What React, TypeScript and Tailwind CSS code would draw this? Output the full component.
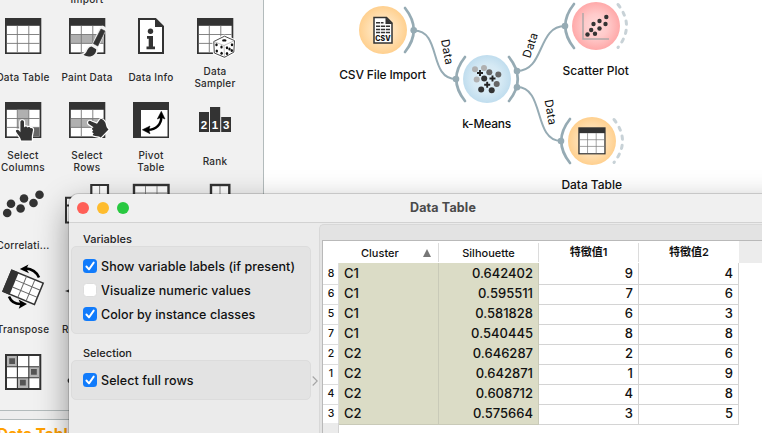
import React from "react";

const INK = "#333333";

function Grid({ row, col, corner }: { row?: boolean; col?: boolean; corner?: boolean }) {
  return (
    <g>
      <rect x="0" y="0" width="36.3" height="36" fill={INK} />
      <rect x="1.8" y="7.8" width="32.8" height="26.6" fill="#fff" />
      {row && <rect x="1.8" y="16.6" width="32.8" height="8.8" fill="#b0b0b0" />}
      {col && <rect x="12.4" y="7.8" width="11.4" height="26.6" fill="#b0b0b0" />}
      {corner && <rect x="24" y="25.5" width="10.6" height="8.9" fill="#666" />}
      <path d="M12.3 7.8V34.4M23.8 7.8V34.4M1.8 16.5H34.6M1.8 25.4H34.6" stroke="#777" strokeWidth="0.9" />
    </g>
  );
}

const icons: Record<string, React.ReactNode> = {
  table: <Grid />,
  paint: (
    <>
      <Grid row />
      <path d="M33.6 11.5L26.4 27.5" stroke="#f2f2f2" strokeWidth="7" strokeLinecap="round" />
      <path d="M13 36.5C18 35.5 17 29 22.5 28L28 31C28.5 38 19 41 13 36.5Z" fill="#f2f2f2" stroke="#f2f2f2" strokeWidth="2" />
      <path d="M32 11L36 13L28.8 28L24.4 25.6Z" fill={INK} stroke={INK} strokeWidth="0.6" strokeLinejoin="round" />
      <path d="M14.5 36.8C18.5 35.8 17.5 29.5 22.6 28.6L27.2 31.2C27.5 37.8 20 40.5 14.5 36.8Z" fill={INK} />
    </>
  ),
  info: (
    <>
      <path d="M6 1H22.5L30 8.5V35H6Z" fill="#fff" stroke={INK} strokeWidth="2" />
      <path d="M22 0L31 9H22Z" fill={INK} />
      <circle cx="17.5" cy="13.3" r="2.7" fill={INK} />
      <path d="M14 18H20V28.5H22V31.3H13.5V28.5H15.7V20.8H14Z" fill={INK} />
    </>
  ),
  sampler: (
    <>
      <Grid />
      <path d="M27.5 18.2L37.5 22.6L36.8 34.2L27.5 39.3L17.3 35L16.8 23.5Z" fill="#fff" stroke="#fff" strokeWidth="3" strokeLinejoin="round" />
      <path d="M27.5 18.2L37.5 22.6L36.8 34.2L27.5 39.3L17.3 35L16.8 23.5Z" fill="#fff" stroke={INK} strokeWidth="0.9" strokeLinejoin="round" />
      <path d="M16.8 23.5L27 27.5L37.5 22.6M27 27.5L27.5 39.3" fill="none" stroke="#999" strokeWidth="0.6" />
      <g fill="#111">
        <ellipse cx="27.3" cy="22.4" rx="2.2" ry="1.2" />
        <ellipse cx="19.5" cy="26.8" rx="1.2" ry="1.5" /><ellipse cx="24.5" cy="29" rx="1.2" ry="1.5" />
        <ellipse cx="19.8" cy="33" rx="1.2" ry="1.5" /><ellipse cx="24.6" cy="35.3" rx="1.2" ry="1.5" />
        <ellipse cx="30" cy="29.8" rx="1.2" ry="1.5" /><ellipse cx="35" cy="26.8" rx="1.2" ry="1.5" />
        <ellipse cx="32.5" cy="31" rx="1.2" ry="1.5" />
        <ellipse cx="30" cy="35.4" rx="1.2" ry="1.5" /><ellipse cx="34.8" cy="32.6" rx="1.2" ry="1.5" />
      </g>
    </>
  ),
  columns: (
    <>
      <Grid col corner />
      <path d="M15.4 20C15.4 17.8 19 17.8 19 20V25.5C20 24 22 24.3 22.3 25.6C23.4 24.5 25.2 25 25.4 26.3C26.6 25.6 28.2 26.5 28 28L26.8 34V38.4H16.2C15.5 35 12.5 32.5 11 29.5C10.4 27.8 12.8 27 14 28.6L15.4 30.2Z" fill={INK} stroke="#fff" strokeWidth="2.4" paintOrder="stroke" />
    </>
  ),
  rows: (
    <>
      <Grid row />
      <path d="M19.3 19.8C20 18.4 21.5 18.8 22.5 19.5L28 21.8L31 17.5C32.4 16.5 33.6 17.4 34.6 18.3C38 21.5 36 24.5 39.5 27.5L31.8 35.5C29.5 33.8 27 34.6 24.5 33.5C23.2 32.7 24 31.6 25 31.4C22.8 30.6 22.8 29.2 24.3 28.4C22.3 27.4 22.7 25.9 24.6 25.3L20.5 22.6C19.5 22 18.8 21 19.3 19.8Z" fill={INK} stroke="#fff" strokeWidth="2.4" paintOrder="stroke" />
    </>
  ),
  pivot: (
    <>
      <rect width="36" height="36" fill={INK} />
      <rect x="8" y="8" width="26.5" height="26.5" fill="#fff" />
      <path d="M28.3 15C28.5 22 23 27.8 15 27.8" fill="none" stroke="#000" strokeWidth="2.4" />
      <path d="M28.3 9.3L32 17L28.3 15.6L24.3 17ZM9.3 27.8L17 24L15.8 27.8L17 31.8Z" fill="#000" stroke="#000" strokeWidth="0.5" />
    </>
  ),
  rank: (
    <>
      <path d="M2 10H12V30H2ZM13 5H23.2V30H13ZM24.2 15H34V30H24.2Z" fill={INK} />
      <g fill="#fff" fontSize="11.5" fontWeight="700" fontFamily="Liberation Sans, sans-serif" textAnchor="middle">
        <text x="7" y="27">2</text><text x="17.9" y="27">1</text><text x="29.2" y="27">3</text>
      </g>
    </>
  ),
  correlations: (
    <g fill={INK}>
      <circle cx="2.2" cy="27" r="4.3" /><circle cx="6" cy="17.8" r="4.3" /><circle cx="15.6" cy="22.5" r="4.3" />
      <circle cx="19" cy="12.5" r="4.3" /><circle cx="28.5" cy="17" r="4.3" /><circle cx="34.5" cy="8.7" r="4.3" />
    </g>
  ),
  merge: (
    <>
      <path d="M-3 11.8H20V36.5H-3ZM-3 19.5H20" fill="#fff" stroke={INK} strokeWidth="2" />
      <path d="M22.3 -1H39V30H22.3Z" fill="#fff" stroke={INK} strokeWidth="2.2" />
      <path d="M30.6 0V20" stroke="#777" strokeWidth="0.9" />
    </>
  ),
  concat: (
    <>
      <rect x="1" y="-1" width="34.5" height="30" fill="#fff" stroke={INK} strokeWidth="2.4" />
      <path d="M12.5 0V28M24 0V28M2 7H35" stroke="#777" strokeWidth="0.9" />
    </>
  ),
  unique: (
    <>
      <rect x="14" y="-1" width="18.3" height="30" fill="#fff" stroke={INK} strokeWidth="2.4" />
      <path d="M23 0V28" stroke="#777" strokeWidth="0.9" />
    </>
  ),
  transpose: (
    <>
      <g transform="translate(7 -0.3) rotate(22.5)">
        <rect x="0" y="0.5" width="34" height="23" fill="#fff" stroke={INK} strokeWidth="1.5" />
        <rect x="-0.7" y="0" width="8" height="24" fill={INK} />
        <path d="M16 0.5V23.5M25 0.5V23.5M7 8.2H34M7 15.8H34" stroke="#666" strokeWidth="0.9" />
      </g>
      <path d="M34 7.5C31.5 1.7 27 -1 20.5 -1.6" fill="none" stroke="#000" strokeWidth="2.6" />
      <path d="M14.8 -1L23.5 -5.5L21.3 -1.3L24 3.2Z" />
      <path d="M4 26.5C6 31.5 10.5 34.2 16 34" fill="none" stroke="#000" strokeWidth="2.6" />
      <path d="M22 34L13.7 38.7L15.5 34L13.5 29.5Z" />
    </>
  ),
  randomize: <path d="M-4 21L4 18V24Z" fill={INK} />,
  discretize: (
    <>
      <rect x="1" y="1" width="34.3" height="34" fill="#fff" stroke={INK} strokeWidth="2" />
      <path d="M2 2H12V12.5H2ZM24 13H34V23.5H24ZM13 24H23.5V34H13Z" fill="#b5b5b5" />
      <path d="M12.4 2V34M23.8 2V34M2 12.8H34M2 23.7H34" stroke={INK} strokeWidth="1.1" />
      <path d="M4.2 4.2H10V10H4.2ZM26 15H31.8V20.8H26ZM15 25.8H20.8V31.6H15Z" fill="#555" />
    </>
  ),
  melt: <circle cx="1.2" cy="26.5" r="2.6" fill={INK} />,
};

const palette: [string, string][][] = [
  [["table", "Data Table"], ["paint", "Paint Data"], ["info", "Data Info"], ["sampler", "Data\nSampler"]],
  [["columns", "Select\nColumns"], ["rows", "Select\nRows"], ["pivot", "Pivot\nTable"], ["rank", "Rank"]],
  [["correlations", "Correlati..."], ["merge", ""], ["concat", ""], ["unique", ""]],
  [["transpose", "Transpose"], ["randomize", "Rename"]],
  [["discretize", ""], ["melt", ""]],
];

function Palette() {
  return (
    <div className="flex h-[433px] w-[264px] shrink-0 flex-col overflow-hidden">
      <div className="h-[411px] shrink-0 overflow-hidden border-r border-b border-[#b3bbbc] bg-[#f1f1f1]">
        <div className="ml-[55px] flex h-[5px] w-16 items-end justify-center text-[10px] leading-3 font-medium tracking-[0.25px] text-[#2b2b2b]">
          Import
        </div>
        <div className="-ml-[9px] grid w-[256px] grid-cols-[repeat(4,64px)]">
          {palette.map((row, r) =>
            [0, 1, 2, 3].map((c) => {
              const item = row[c];
              return (
                <div key={`${r}-${c}`} className="flex h-[84px] flex-col items-center gap-[11px] pt-[13px]">
                  <svg className="h-9 w-9 shrink-0 overflow-visible" viewBox="0 0 36 36">{item && icons[item[0]]}</svg>
                  <div className="flex h-6 shrink-0 items-center text-center text-[10px] leading-3 font-medium tracking-[0.25px] whitespace-pre text-[#2b2b2b]">
                    {item?.[0] === "randomize" ? <span className="w-[50px] text-left">{item[1]}</span> : item?.[1]}
                  </div>
                </div>
              );
            })
          )}
        </div>
      </div>
      <div className="h-[9px] shrink-0 border-b border-[#b3bbbc] bg-[#eeeeee]" />
      <div className="h-[13px] shrink-0 overflow-hidden bg-white pt-[5px]">
        <div className="-ml-[3px] text-[15.5px] leading-5 font-bold whitespace-nowrap text-[#ffa000]">Data Table</div>
      </div>
    </div>
  );
}

function Canvas() {
  return (
    <svg className="h-[433px] w-[498px] shrink-0 bg-white" viewBox="264 0 498 433">
      <defs>
        <radialGradient id="orange"><stop offset="0" stopColor="#ffe9cb" /><stop offset="0.5" stopColor="#ffe2b8" /><stop offset="1" stopColor="#ffd08f" /></radialGradient>
        <radialGradient id="blue"><stop offset="0" stopColor="#e0eff7" /><stop offset="0.6" stopColor="#d5e9f4" /><stop offset="1" stopColor="#c0ddee" /></radialGradient>
        <radialGradient id="red"><stop offset="0" stopColor="#ffdada" /><stop offset="0.5" stopColor="#ffcaca" /><stop offset="1" stopColor="#ffa9a9" /></radialGradient>
      </defs>
      <g fill="none" stroke="#96abb4" strokeWidth="2">
        <path d="M414 30.5C442 30.5 428 79 456 79" />
        <path d="M517 71C545 71 537 26 565 26" />
        <path d="M517 87C545 87 533 141 561 141" />
      </g>
      <g fill="none" stroke="#96abb4" strokeWidth="2.7" strokeLinecap="round">
        <path d="M405 8Q422.5 30 405 52" />
        <path d="M465 57Q447.5 79 465 101" />
        <path d="M509 57Q526.5 79 509 101" />
        <path d="M574 4Q556.5 26 574 48" />
        <path d="M570 119Q552.5 141 570 163" />
        <g stroke="#c8d2d7" strokeWidth="3" strokeDasharray="3.2 6.1">
          <path d="M618 4.500Q635 26 618 47.500" />
          <path d="M614 119.500Q631 141 614 162.500" />
        </g>
      </g>
      <g fill="#96abb4">
        <circle cx="413.7" cy="30.3" r="3.3" /><circle cx="456" cy="79" r="3.3" />
        <circle cx="517" cy="71" r="3.3" /><circle cx="517" cy="87.3" r="3.3" />
        <circle cx="565" cy="26" r="3.3" /><circle cx="561" cy="141" r="3.3" />
      </g>
      <circle cx="383" cy="30" r="24" fill="url(#orange)" />
      <circle cx="487" cy="79" r="24" fill="url(#blue)" />
      <circle cx="596" cy="26" r="24" fill="url(#red)" />
      <circle cx="592" cy="141" r="24" fill="url(#orange)" />

      <path d="M374 17.500H386.500L392 23V43H374Z" fill="#fff" stroke={INK} strokeWidth="1.500" />
      <path d="M385.500 17L392.500 24H385.500Z" fill={INK} />
      <path d="M376 22.800H383.500M376 26.300H390M376 29.600H390M376 32.600H390" stroke={INK} strokeWidth="1.500" strokeDasharray="4.200 0.800" />
      <text x="383" y="41" fontSize="7" fontWeight="800" textAnchor="middle" textLength="15.500" fill="#111">CSV</text>

      <g fill="#b0b0b0"><circle cx="475" cy="69.3" r="3" /><circle cx="484" cy="68" r="3" /><circle cx="476.7" cy="79.5" r="3" /></g>
      <g fill="#666"><circle cx="489.3" cy="72.3" r="3" /><circle cx="498.3" cy="74.5" r="3" /><circle cx="496.7" cy="84" r="3" /></g>
      <g fill={INK}><circle cx="484.2" cy="78.5" r="3" /><circle cx="481.2" cy="89.5" r="3" /><circle cx="491.7" cy="90.2" r="3" /></g>
      <path d="M477 73H483M480 70V76M489.500 78.500H495.500M492.500 75.500V81.500M484.200 84.800H490.200M487.200 81.800V87.800" stroke="#222" strokeWidth="1.900" />

      <path d="M583 13V39H609" fill="none" stroke="#b0a8a8" strokeWidth="1.500" />
      <g fill={INK}>
        <circle cx="587.5" cy="34.5" r="2.2" /><circle cx="591.2" cy="30" r="2.2" /><circle cx="595" cy="33.8" r="2.2" />
        <circle cx="593.5" cy="24" r="2.2" /><circle cx="599.5" cy="28.5" r="2.2" /><circle cx="599.5" cy="21" r="2.2" />
        <circle cx="605.5" cy="24" r="2.2" /><circle cx="606.3" cy="17" r="2.2" />
      </g>
      <g transform="translate(578.3 127.3) scale(0.752)"><Grid /></g>

      <g fontSize="12" fontWeight="500" fill="#111" textAnchor="middle">
        <text x="382.7" y="78.7" textLength="87">CSV File Import</text>
        <text x="486.7" y="127.7" textLength="49">k-Means</text>
        <text x="595.7" y="74.5" textLength="66.5">Scatter Plot</text>
        <text x="591.7" y="189.3" textLength="60.5">Data Table</text>
      </g>
      <g fontSize="11.500" fill="#111" textAnchor="middle">
        <text transform="translate(443.3 52.5) rotate(80)" textLength="25.5">Data</text>
        <text transform="translate(534 46.5) rotate(-72)" textLength="25.5">Data</text>
        <text transform="translate(546.7 112.7) rotate(80)" textLength="25.5">Data</text>
      </g>
    </svg>
  );
}

function Check({ label, on }: { label: string; on?: boolean }) {
  return (
    <div className="flex h-6 items-center gap-[4px]">
      <div className={on ? "flex h-[14px] w-[14px] items-center justify-center rounded-[3.5px] bg-[#117bfb]" : "h-[14px] w-[14px] rounded-[3.5px] border border-[#dddddd] bg-white"}>
        {on && (
          <svg className="h-[14px] w-[14px]" viewBox="0 0 14 14">
            <path d="M3.4 7.5L6 10.4L10.7 3.6" fill="none" stroke="#fff" strokeWidth="1.9" strokeLinecap="round" strokeLinejoin="round" />
          </svg>
        )}
      </div>
      <span className="pt-px text-[12.5px] leading-4 font-medium tracking-[0.06px] whitespace-nowrap text-[#111]">{label}</span>
    </div>
  );
}

const rows = [
  ["8", "C1", "0.642402", "9", "4"],
  ["6", "C1", "0.595511", "7", "6"],
  ["5", "C1", "0.581828", "6", "3"],
  ["7", "C1", "0.540445", "8", "8"],
  ["2", "C2", "0.646287", "2", "6"],
  ["1", "C2", "0.642871", "1", "9"],
  ["4", "C2", "0.608712", "4", "8"],
  ["3", "C2", "0.575664", "3", "5"],
];

function DataGrid() {
  return (
    <div className="flex h-[193px] flex-col border-t border-l border-[#b9b9b9] bg-white text-[#111]">
      <div className="flex h-[22px] shrink-0 bg-[#ececec]">
        <div className="grid w-[416px] grid-cols-[16px_100px_100px_100px_100px] bg-white text-center text-[11px] leading-[18px] font-medium">
          <div />
          <div className="my-[2px] flex items-center border-r border-[#dcdcdc]">
            <span className="ml-[22px]">Cluster</span>
            <svg className="mr-[7px] ml-auto h-2 w-2" viewBox="0 0 8 8"><path d="M4 0L8 8H0Z" fill="#777" /></svg>
          </div>
          <div className="my-[2px] flex items-center justify-center border-r border-[#dcdcdc]">Silhouette</div>
          <div className="my-[2px] flex items-center justify-center border-r border-[#dcdcdc] pb-px font-semibold">特徵值1</div>
          <div className="my-[2px] flex items-center justify-center pb-px font-semibold">特徵值2</div>
        </div>
      </div>
      {rows.map((r) => (
        <div key={r[0]} className="grid h-5 w-[416px] shrink-0 grid-cols-[16px_100px_100px_100px_100px] text-right text-[13px] leading-5 font-medium">
          <div className="border-r border-b border-[#dddddd] pl-px text-center text-[10.5px] leading-[21px]">{r[0]}</div>
          <div className="border-r border-b border-[#c9cab8] bg-[#dbdcc6] pl-[5px] text-left">{r[1]}</div>
          <div className="border-r border-b border-[#c9cab8] bg-[#dbdcc6] pr-[5px]">{r[2]}</div>
          <div className="border-r border-b border-[#d4d4d4] pr-[5px]">{r[3]}</div>
          <div className="border-r border-b border-[#d4d4d4] pr-[5px]">{r[4]}</div>
        </div>
      ))}
      <div className="w-[16px] grow border-r border-[#d4d4d4] bg-[#ebebeb]" />
    </div>
  );
}

function DataTableWindow() {
  return (
    <div className="absolute top-[194px] left-[69px] flex h-[300px] w-[748px] flex-col overflow-hidden rounded-[10px] bg-[#ebebeb] shadow-[0_0_0_1px_rgba(0,0,0,0.14),0_12px_32px_rgba(0,0,0,0.42)]">
      <div className="flex h-[29px] shrink-0 items-center border-b border-[#d2d2d2] bg-[#f0f0f0] pl-2">
        <div className="flex gap-2">
          <div className="h-3 w-3 rounded-full bg-[#ff5f57]" />
          <div className="h-3 w-3 rounded-full bg-[#febc2e]" />
          <div className="h-3 w-3 rounded-full bg-[#28c840]" />
        </div>
        <div className="ml-[274px] w-[80px] text-center text-[12.5px] font-bold tracking-[0.15px] whitespace-nowrap text-[#4a4a4a]">Data Table</div>
      </div>
      <div className="flex h-[210px]">
        <div className="w-[242px] shrink-0 pl-[2px] text-[11px] font-medium text-[#222]">
          <div className="flex h-[23px] items-center pt-[9px] pl-3">Variables</div>
          <div className="h-[88px] rounded-[5px] border border-[#dcdcdc] bg-[#e3e3e3] pt-[7px] pl-[11px]">
            <Check label="Show variable labels (if present)" on />
            <Check label="Visualize numeric values" />
            <Check label="Color by instance classes" on />
          </div>
          <div className="flex h-[26px] items-center pt-[12px] pl-3">Selection</div>
          <div className="h-[40px] rounded-[5px] border border-[#dcdcdc] bg-[#e3e3e3] pt-[7px] pl-[11px]">
            <Check label="Select full rows" on />
          </div>
        </div>
        <div className="w-[8px] shrink-0 pt-[153px] pl-[1px]">
          <svg className="h-[10px] w-[6px]" viewBox="0 0 6 10"><path d="M0.7 0.5L5.2 5L0.7 9.5" fill="none" stroke="#a5a5a5" strokeWidth="1.1" /></svg>
        </div>
        <div className="mt-[1px] grow rounded-tl-[5px] border-t border-l border-[#d8d8d8] bg-[#e3e3e3] pt-[15px] pl-[2px]">
          <DataGrid />
        </div>
      </div>
    </div>
  );
}

export default function App() {
  return (
    <div className="relative flex h-[433px] w-[762px] overflow-hidden bg-white font-[Inter,'Noto_Sans_CJK_TC',sans-serif]">
      <Palette />
      <Canvas />
      <DataTableWindow />
    </div>
  );
}
